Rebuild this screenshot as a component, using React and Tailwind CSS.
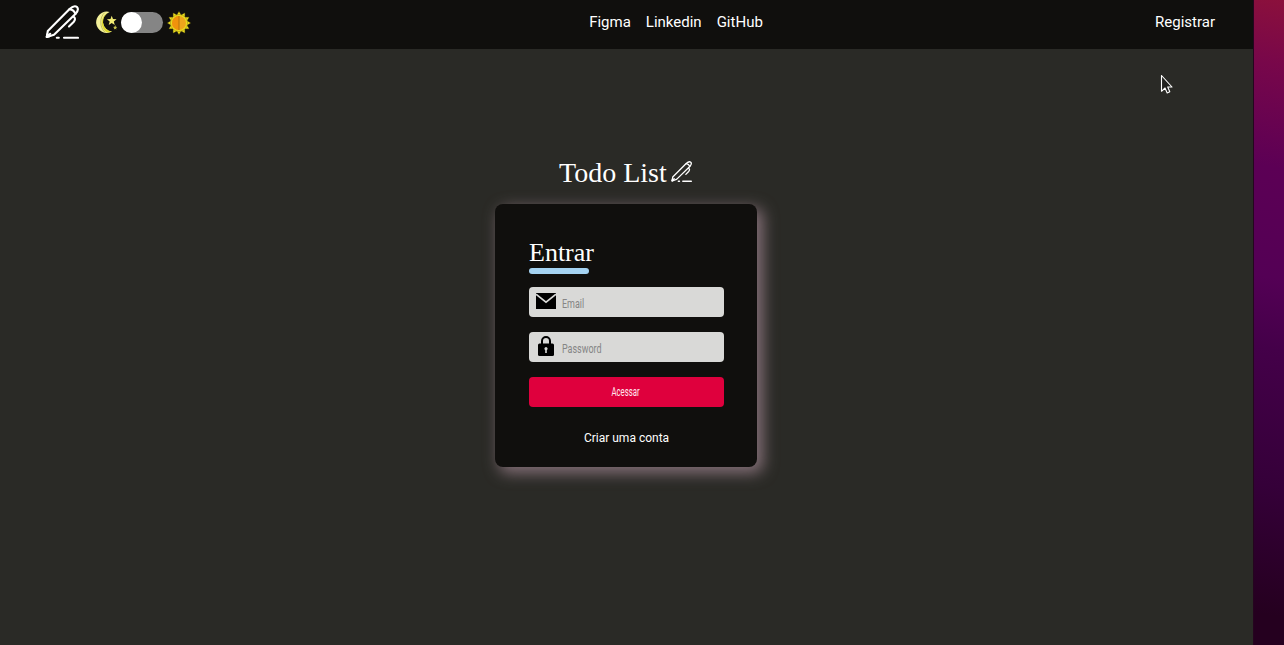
import React from "react";

function Pen({ className }) {
  return (
    <svg viewBox="0 0 34 34" className={className} fill="none" stroke="white" strokeWidth="2.1" strokeLinecap="round" strokeLinejoin="round">
      <path d="M1.8 32 2.8 26 24.6 4.1Q29.2-.3 32 2 34.4 4.6 30.4 9L9 29.7Z" />
      <path d="M24.6 4.1Q29 4.8 30.4 9M1.8 32 5.2 28.8M28.6 11.6Q31.4 13.6 28.6 17L24 21.6" />
      <path d="M1.8 32 2.3 29.2 4.4 31.2Z" fill="white" />
      <path d="M11.8 32.8h2M19 32.8h14" />
    </svg>
  );
}

function Moon() {
  return (
    <svg viewBox="0 0 24 24" className="h-6 w-6">
      <path d="M15.6 1.9A10.7 10.7 0 1 0 18 21.6 10.2 10.2 0 0 1 15.6 1.9Z" fill="#f3f09a" />
      <path d="M14 3C6.5 5 5.5 19 13.5 22.6L18 21.6A10.2 10.2 0 0 1 15.6 1.9Z" fill="#ded92f" />
      <path d="M10.8 2.5C5.4 7 5.4 17.5 11 22.2" fill="none" stroke="#a6a12b" strokeWidth=".6" />
      <path d="m17.7 5.7 1.3 3.4 3.6.2-2.8 2.2 1 3.5-3.1-1.9-3 1.9 1-3.5-2.8-2.2 3.6-.2Z" fill="#f2ec75" />
      <path d="m21.2 15.1.6 1.7 1.5.2-1.2 1 .3 1.6-1.2-.9-1.3.9.3-1.6-1.1-1 1.5-.2Z" fill="#c9c34d" />
    </svg>
  );
}

const rays = Array.from({ length: 12 }, (_, i) => i * 30);

function Sun() {
  return (
    <svg viewBox="-12 -12 24 24" className="h-6 w-6">
      {rays.map((a) => (
        <path key={a} d="M-2.4-7.5 0-11.6 2.4-7.5Z" fill="#f3e51d" stroke="#756b14" strokeWidth=".3" transform={`rotate(${a})`} />
      ))}
      <circle r="8.6" fill="#eadb1d" stroke="#776413" strokeWidth=".4" />
      <circle r="7" fill="#eda51c" />
      <path d="M0-7A7 7 0 0 0 0 7Z" fill="#f0920c" />
      <path d="M0-7V7" stroke="#a76a0d" strokeWidth=".8" />
    </svg>
  );
}

function Field({ label, children }) {
  return (
    <label className="flex h-[30px] items-center rounded bg-[#d9d9d7]">
      <span className="flex h-full w-[33px] shrink-0 justify-center pl-px">{children}</span>
      <span className="mt-[3px] origin-left scale-x-[.69] font-['Roboto',sans-serif] text-[13px] text-[#858585]">{label}</span>
    </label>
  );
}

export default function App() {
  return (
    <div className="relative flex h-[645px] w-[1284px] overflow-hidden bg-[#2a2a26] font-['Roboto',sans-serif] text-white">
      <div className="flex w-[1253px] flex-col">
        <header className="grid h-[49px] shrink-0 grid-cols-3 bg-[#100f0d] pb-[5px] text-[15px]">
          <div className="flex items-center pl-[45px]">
            <Pen className="h-[34px] w-[34px]" />
            <div className="ml-[15px]"><Moon /></div>
            <div className="ml-[3px] flex h-[21px] w-[42px] items-center rounded-full bg-[#858585]">
              <span className="size-[21px] rounded-full bg-white" />
            </div>
            <div className="ml-[3.5px] pt-px"><Sun /></div>
          </div>
          <nav className="flex items-center justify-center gap-[15px] pl-[99px]">
            <a>Figma</a><a>Linkedin</a><a>GitHub</a>
          </nav>
          <div className="flex items-center justify-end pr-[38px]"><a>Registrar</a></div>
        </header>
        <main className="flex flex-1 flex-col items-center pr-px">
          <h1 className="mt-[104px] flex h-10 w-[134px] items-center font-['Liberation_Serif',serif] text-[28px] leading-10">
            <span className="w-[112px] whitespace-nowrap">Todo List</span>
            <Pen className="mb-1 h-[21px] w-[21px] shrink-0" />
          </h1>
          <section className="mt-[11px] flex h-[263px] w-[262px] flex-col rounded-lg bg-[#100f0d] pl-[34px] pr-[33px] shadow-[5px_5px_15px_1px_#857078]">
            <h2 className="mt-[32px] h-[32px] font-['Liberation_Serif',serif] text-[26px] leading-[34px]">Entrar</h2>
            <div className="h-[6px] w-[60px] rounded-full bg-[#a5d3f2]" />
            <form className="mt-[13px] flex flex-col gap-[15px]">
              <Field label="Email">
                <svg viewBox="0 0 20 16" className="mt-[6px] h-4 w-5">
                  <path d="M0 0H20V16H0Z" />
                  <path d="m0 1.2 10 8 10-8" fill="none" stroke="#d9d9d7" strokeWidth="1.6" />
                </svg>
              </Field>
              <Field label="Password">
                <svg viewBox="0 0 16 20" className="mt-1 h-5 w-4">
                  <path d="M4 9V5a4 4 0 0 1 8 0v4" fill="none" stroke="black" strokeWidth="2" />
                  <rect y="7.5" width="16" height="12.5" rx="1.5" />
                  <path d="M8 11a1.8 1.8 0 0 1 .8 3.3V17H7.2v-2.7A1.8 1.8 0 0 1 8 11Z" fill="#d9d9d7" />
                </svg>
              </Field>
              <button type="button" className="flex h-[30px] items-center justify-center rounded bg-[#df003d] pr-px text-[13px]">
                <span className="inline-block scale-x-[.6] text-[#ffe8ee]">Acessar</span>
              </button>
            </form>
            <a className="mt-[22px] text-center text-xs leading-[18px]">Criar uma conta</a>
          </section>
        </main>
      </div>
      <aside className="w-[31px] border-l border-[#25051f] bg-[linear-gradient(190deg,#8b103c_0%,#78074a_10%,#5c0055_26%,#540055_43%,#440049_54%,#350039_75%,#25001f_95%)]" />
      <svg viewBox="0 0 13 20" className="absolute left-[1160px] top-[74px] h-5 w-[13px]" fill="#22221f" stroke="white" strokeWidth="1.1" strokeLinejoin="round">
        <path d="M1.5 1.5V17.3L5 14 7.2 19 9.8 17.8 7.7 13H12Z" />
      </svg>
    </div>
  );
}
